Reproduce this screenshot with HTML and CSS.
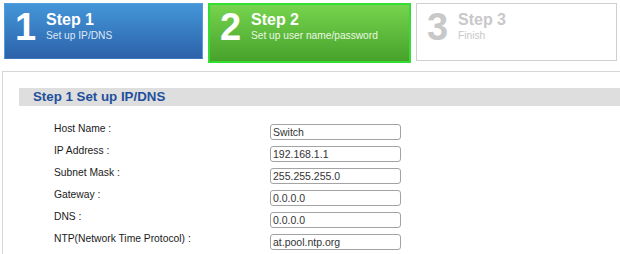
FILE: index.html
```html
<!DOCTYPE html>
<html>
<head>
<meta charset="utf-8">
<link rel="stylesheet" href="styles.css">
</head>
<body>
<div class="steps">
  <div class="step step-done">
    <div class="num">1</div>
    <div class="txt"><div class="st">Step 1</div><div class="sub">Set up IP/DNS</div></div>
  </div>
  <div class="step step-active">
    <div class="num">2</div>
    <div class="txt"><div class="st">Step 2</div><div class="sub">Set up user name/password</div></div>
  </div>
  <div class="step step-todo">
    <div class="num">3</div>
    <div class="txt"><div class="st">Step 3</div><div class="sub">Finish</div></div>
  </div>
</div>
<div class="panel">
  <div class="bar">Step 1 Set up IP/DNS</div>
  <div class="form">
    <div class="row"><span class="lbl">Host Name :</span><input class="inp" type="text" value="Switch"></div>
    <div class="row"><span class="lbl">IP Address :</span><input class="inp" type="text" value="192.168.1.1"></div>
    <div class="row"><span class="lbl">Subnet Mask :</span><input class="inp" type="text" value="255.255.255.0"></div>
    <div class="row"><span class="lbl">Gateway :</span><input class="inp" type="text" value="0.0.0.0"></div>
    <div class="row"><span class="lbl">DNS :</span><input class="inp" type="text" value="0.0.0.0"></div>
    <div class="row"><span class="lbl">NTP(Network Time Protocol) :</span><input class="inp" type="text" value="at.pool.ntp.org"></div>
  </div>
</div>
</body>
</html>
```
FILE: styles.css
```css
html, body {
  margin: 0;
  padding: 0;
  background: #fff;
  overflow: hidden;
  width: 620px;
  height: 254px;
  font-family: "Liberation Sans", Arial, sans-serif;
}
.steps {
  display: flex;
  align-items: flex-start;
  gap: 5px;
  padding: 3px 0 0 4px;
}
.step {
  box-sizing: border-box;
  display: flex;
  align-items: flex-start;
  padding: 8px 0 0 10px;
}
.step-done {
  width: 199px;
  height: 56px;
  border: 1px solid #4f9ddd;
  border-bottom-color: #3d78bf;
  background: linear-gradient(#4396d8, #2d62aa);
  color: #fff;
}
.step-active {
  width: 203px;
  height: 60px;
  border: 2px solid #33dd33;
  padding-top: 7px;
  padding-left: 10px;
  background: linear-gradient(#76d44e, #47a22b);
  color: #fff;
}
.step-todo {
  width: 201px;
  height: 58px;
  border: 1px solid #cfcfcf;
  background: #fff;
  color: #c8c8c8;
}
.num {
  width: 31px;
  font-size: 38px;
  font-weight: bold;
  line-height: 31px;
}
.st {
  font-size: 16px;
  font-weight: bold;
  line-height: 16px;
}
.sub {
  font-size: 10.2px;
  line-height: 13px;
  margin-top: 1px;
}
.step-done .sub { color: #dce8f6; }
.step-active .sub { color: #eaf8e2; }
.panel {
  box-sizing: border-box;
  width: 618px;
  height: 183px;
  margin: 8px 0 0 2px;
  border: 1px solid #d6d6d6;
  border-right: none;
  border-bottom: none;
  padding: 16px 0 0 16px;
}
.bar {
  background: #dedede;
  height: 18px;
  line-height: 18px;
  padding-left: 14px;
  font-size: 13.3px;
  font-weight: bold;
  color: #1e4f9c;
}
.form {
  padding: 18px 0 0 35px;
}
.row {
  display: flex;
  align-items: flex-start;
  height: 22px;
}
.row:last-child {
  height: 17px;
}
.lbl {
  width: 216px;
  font-size: 10.3px;
  line-height: 10px;
  color: #1a1a1a;
}
.inp {
  box-sizing: border-box;
  width: 131px;
  height: 16px;
  margin: 0;
  padding: 0 2px;
  border: 1px solid #a3a3a3;
  border-radius: 3px;
  font-family: "Liberation Sans", Arial, sans-serif;
  font-size: 10.5px;
  color: #333;
  background: #fff;
  outline: none;
}
```
